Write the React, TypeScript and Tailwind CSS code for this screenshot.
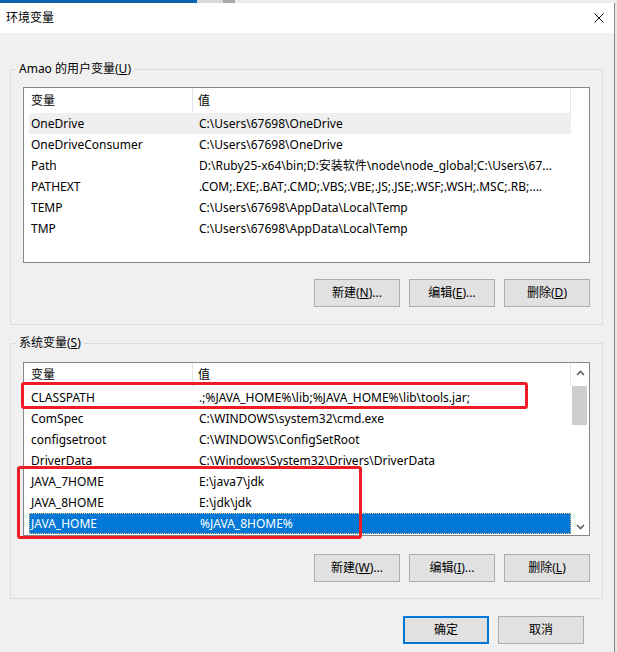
import React from "react";

type Row = [string, string];

const userRows: Row[] = [
  ["OneDrive", "C:\\Users\\67698\\OneDrive"],
  ["OneDriveConsumer", "C:\\Users\\67698\\OneDrive"],
  ["Path", "D:\\Ruby25-x64\\bin;D:安装软件\\node\\node_global;C:\\Users\\67..."],
  ["PATHEXT", ".COM;.EXE;.BAT;.CMD;.VBS;.VBE;.JS;.JSE;.WSF;.WSH;.MSC;.RB;...."],
  ["TEMP", "C:\\Users\\67698\\AppData\\Local\\Temp"],
  ["TMP", "C:\\Users\\67698\\AppData\\Local\\Temp"],
];

const sysRows: Row[] = [
  ["CLASSPATH", ".;%JAVA_HOME%\\lib;%JAVA_HOME%\\lib\\tools.jar;"],
  ["ComSpec", "C:\\WINDOWS\\system32\\cmd.exe"],
  ["configsetroot", "C:\\WINDOWS\\ConfigSetRoot"],
  ["DriverData", "C:\\Windows\\System32\\Drivers\\DriverData"],
  ["JAVA_7HOME", "E:\\java7\\jdk"],
  ["JAVA_8HOME", "E:\\jdk\\jdk"],
  ["JAVA_HOME", "%JAVA_8HOME%"],
];

function Chevron({ up }: { up: boolean }) {
  return (
    <svg width="9" height="6" viewBox="0 0 9 6">
      <polyline
        points={up ? "1,5 4.5,1.5 8,5" : "1,1 4.5,4.5 8,1"}
        fill="none"
        stroke="#606060"
        strokeWidth="1.6"
      />
    </svg>
  );
}

function VarTable({
  rows,
  headerH,
  heightClass,
  hoverIndex,
  selectedIndex,
  scrollbar,
}: {
  rows: Row[];
  headerH: string;
  heightClass: string;
  hoverIndex?: number;
  selectedIndex?: number;
  scrollbar?: boolean;
}) {
  return (
    <div className={`flex w-[567px] border border-[#828790] bg-white ${heightClass}`}>
      <div className="flex w-[547px] flex-col">
        <div className={`flex ${headerH}`}>
          <div className="flex w-[169px] items-center border-r border-[#e5e5e5] pl-[7px]">变量</div>
          <div className="flex flex-1 items-center border-r border-[#e5e5e5] pl-[5px]">值</div>
        </div>
        <div className="flex flex-col pl-[5px]">
          {rows.map(([name, value], i) => {
            const sel = i === selectedIndex;
            const hov = i === hoverIndex;
            return (
              <div
                key={name}
                className={`flex h-[21px] items-center whitespace-nowrap leading-[18px] ${
                  sel
                    ? "border border-dotted border-[#f5c27a] bg-[#0078d7] text-white"
                    : hov
                    ? "bg-[#efefef]"
                    : ""
                }`}
              >
                <div className={`w-[164px] overflow-hidden ${sel ? "pl-[1px]" : "pl-[2px]"}`}>{name}</div>
                <div className="flex-1 overflow-hidden pl-[6px]">{value}</div>
              </div>
            );
          })}
        </div>
      </div>
      <div className="flex w-[18px] flex-col">
        {scrollbar && (
          <>
            <div className="flex h-[20px] items-center justify-center pl-[1px]">
              <Chevron up />
            </div>
            <div className="ml-[1px] mt-[3px] h-[39px] w-[15px] bg-[#cdcdcd]" />
            <div className="flex-1" />
            <div className="flex h-[17px] items-center justify-center pl-[1px]">
              <Chevron up={false} />
            </div>
          </>
        )}
      </div>
    </div>
  );
}

function Btn({ children, primary }: { children: React.ReactNode; primary?: boolean }) {
  return (
    <div
      className={`flex h-[28px] w-[86px] items-center justify-center bg-[#e1e1e1] text-[12px] leading-[18px] ${
        primary ? "border-2 border-[#0078d7]" : "border border-[#adadad]"
      }`}
    >
      {children}
    </div>
  );
}

export default function App() {
  return (
    <div className="relative h-[652px] w-[617px] overflow-hidden bg-[#f0f0f0] font-['Noto_Sans','Noto_Sans_CJK_SC',sans-serif] text-[12px] leading-none text-black">
      {/* top strip from window behind */}
      <div className="flex h-[3px]">
        <div className="w-[197px] bg-[#0a64ad]" />
        <div className="w-[26px] bg-[#d9d9d9]" />
        <div className="w-[12px] bg-[#a8a8a8]" />
        <div className="flex-1 bg-[#ececec]" />
      </div>
      <div className="flex h-[649px]">
        <div className="flex w-[614px] flex-col">
          {/* title bar */}
          <div className="flex h-[30px] items-center justify-between bg-white pl-[6px] pr-[10px]">
            <span className="text-[12px] leading-[18px]">环境变量</span>
            <svg width="10" height="10" viewBox="0 0 10 10">
              <path d="M0.5 0.5 L9.5 9.5 M9.5 0.5 L0.5 9.5" stroke="#111" strokeWidth="1" />
            </svg>
          </div>
          {/* body */}
          <div className="flex flex-1 flex-col bg-[#f0f0f0]">
            <fieldset className="ml-[10px] mt-[28px] w-[593px] border border-[#dcdcdc] px-[12px] pb-[17px] pt-[10px]">
              <legend className="-ml-[7px] px-[3px] leading-[16px]">
                Amao 的用户变量(<span className="underline">U</span>)
              </legend>
              <VarTable rows={userRows} headerH="h-[25px]" heightClass="h-[176px]" hoverIndex={0} />
              <div className="mt-[16px] flex justify-end gap-[9px]">
                <Btn>
                  新建(<span className="underline">N</span>)...
                </Btn>
                <Btn>
                  编辑(<span className="underline">E</span>)...
                </Btn>
                <Btn>
                  删除(<span className="underline">D</span>)
                </Btn>
              </div>
            </fieldset>
            <fieldset className="ml-[10px] mt-[10px] w-[593px] border border-[#dcdcdc] px-[12px] pb-[16px] pt-[11px]">
              <legend className="-ml-[7px] px-[3px] leading-[16px]">
                系统变量(<span className="underline">S</span>)
              </legend>
              <VarTable
                rows={sysRows}
                headerH="h-[24px]"
                heightClass="h-[174px]"
                selectedIndex={6}
                scrollbar
              />
              <div className="mt-[18px] flex justify-end gap-[9px]">
                <Btn>
                  新建(<span className="underline">W</span>)...
                </Btn>
                <Btn>
                  编辑(<span className="underline">I</span>)...
                </Btn>
                <Btn>
                  删除(<span className="underline">L</span>)
                </Btn>
              </div>
            </fieldset>
            <div className="mt-[17px] flex justify-end gap-[9px] pr-[30px]">
              <Btn primary>确定</Btn>
              <Btn>取消</Btn>
            </div>
          </div>
        </div>
        <div className="w-[1px] bg-[#8a8a8a]" />
        <div className="flex-1 bg-[#e6e6e6]" />
      </div>

      {/* red annotation boxes */}
      <div className="absolute left-[21px] top-[382px] h-[27px] w-[507px] rounded-[3px] border-[3px] border-[#ee1c24]" />
      <div className="absolute left-[17px] top-[466px] h-[73px] w-[345px] rounded-[3px] border-[3px] border-[#ee1c24]" />
    </div>
  );
}
